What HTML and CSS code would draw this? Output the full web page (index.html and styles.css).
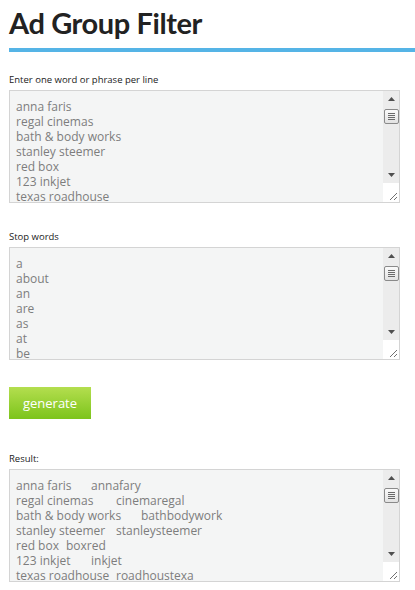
FILE: index.html
```html
<!DOCTYPE html>
<html>
<head>
<meta charset="utf-8">
<link rel="stylesheet" href="styles.css">
</head>
<body>
<div class="page">
  <h1 class="title">Ad Group Filter</h1>
  <div class="rule"></div>

  <div class="group first">
    <label class="lbl">Enter one word or phrase per line</label>
    <div class="field">
      <textarea class="ta" spellcheck="false">anna faris
regal cinemas
bath &amp; body works
stanley steemer
red box
123 inkjet
texas roadhouse</textarea>
      <div class="sb">
        <div class="sb-btn"><svg width="7" height="4" viewBox="0 0 7 4"><path d="M0 4 L3.5 0 L7 4 Z" fill="#505050"/></svg></div>
        <div class="sb-track"><div class="sb-thumb"><i></i><i></i><i></i><i></i></div></div>
        <div class="sb-btn"><svg width="7" height="4" viewBox="0 0 7 4"><path d="M0 0 L7 0 L3.5 4 Z" fill="#505050"/></svg></div>
        <div class="sb-corner"><svg width="8" height="8" viewBox="0 0 8 8"><path d="M1 8 L8 1 M5 8 L8 5" stroke="#707070" stroke-width="1"/></svg></div>
      </div>
    </div>
  </div>

  <div class="group">
    <label class="lbl">Stop words</label>
    <div class="field">
      <textarea class="ta" spellcheck="false">a
about
an
are
as
at
be
by
com
for
from
how
in
is
it
of
on
or
that
the
this
to
was
what
when
where
who
will
with
www</textarea>
      <div class="sb">
        <div class="sb-btn"><svg width="7" height="4" viewBox="0 0 7 4"><path d="M0 4 L3.5 0 L7 4 Z" fill="#505050"/></svg></div>
        <div class="sb-track"><div class="sb-thumb"><i></i><i></i><i></i><i></i></div></div>
        <div class="sb-btn"><svg width="7" height="4" viewBox="0 0 7 4"><path d="M0 0 L7 0 L3.5 4 Z" fill="#505050"/></svg></div>
        <div class="sb-corner"><svg width="8" height="8" viewBox="0 0 8 8"><path d="M1 8 L8 1 M5 8 L8 5" stroke="#707070" stroke-width="1"/></svg></div>
      </div>
    </div>
  </div>

  <button class="btn" type="button">generate</button>

  <div class="group result">
    <label class="lbl">Result:</label>
    <div class="field">
      <textarea class="ta" spellcheck="false">anna faris	annafary
regal cinemas	cinemaregal
bath &amp; body works	bathbodywork
stanley steemer	stanleysteemer
red box	boxred
123 inkjet	inkjet
texas roadhouse	roadhoustexa</textarea>
      <div class="sb">
        <div class="sb-btn"><svg width="7" height="4" viewBox="0 0 7 4"><path d="M0 4 L3.5 0 L7 4 Z" fill="#505050"/></svg></div>
        <div class="sb-track"><div class="sb-thumb"><i></i><i></i><i></i><i></i></div></div>
        <div class="sb-btn"><svg width="7" height="4" viewBox="0 0 7 4"><path d="M0 0 L7 0 L3.5 4 Z" fill="#505050"/></svg></div>
        <div class="sb-corner"><svg width="8" height="8" viewBox="0 0 8 8"><path d="M1 8 L8 1 M5 8 L8 5" stroke="#707070" stroke-width="1"/></svg></div>
      </div>
    </div>
  </div>
</div>
</body>
</html>
```
FILE: styles.css
```css
html, body {
  margin: 0;
  padding: 0;
  background: #ffffff;
}
body {
  font-family: "Open Sans", "Noto Sans", sans-serif;
  color: #333;
}
.page {
  padding-left: 9px;
}
.title {
  margin: 0;
  padding-top: 5px;
  font-family: Lato, "Open Sans", sans-serif;
  font-size: 29px;
  line-height: 36px;
  font-weight: 700;
  letter-spacing: -0.4px;
  color: #222222;
}
.rule {
  margin-top: 7px;
  height: 4px;
  background: #55b4e6;
}
.group {
  width: 391px;
  margin-top: 27px;
}
.group.first {
  margin-top: 21px;
}
.group.result {
  margin-top: 33px;
}
.lbl {
  display: block;
  font-size: 9.5px;
  line-height: 14px;
  color: #222;
  margin-bottom: 3px;
}
.field {
  display: flex;
  height: 113px;
  box-sizing: border-box;
  border: 1px solid #d4d4d4;
  background: #f4f5f5;
}
.ta {
  flex: 1;
  min-width: 0;
  margin: 0;
  border: 0;
  outline: none;
  background: transparent;
  resize: none;
  overflow: hidden;
  padding: 8px 6px 0 6px;
  font-family: "Open Sans", "Noto Sans", sans-serif;
  font-size: 12px;
  line-height: 15px;
  color: #7d7d7d;
  tab-size: 25px;
  white-space: pre;
}
.sb {
  width: 16px;
  display: flex;
  flex-direction: column;
  background: #ececec;
}
.sb-btn {
  height: 16px;
  display: flex;
  align-items: center;
  justify-content: center;
}
.sb-btn svg {
  display: block;
}
.sb-track {
  flex: 1;
  padding-top: 2px;
}
.sb-thumb {
  width: 13px;
  height: 13px;
  margin-left: 1px;
  border: 1px solid #8a8a8a;
  border-radius: 2px;
  background: linear-gradient(#fafafa, #e2e2e2);
  display: flex;
  flex-direction: column;
  justify-content: center;
  align-items: center;
  gap: 1px;
}
.sb-thumb i {
  display: block;
  width: 7px;
  height: 1px;
  background: #6a6a6a;
}
.sb-corner {
  height: 19px;
  background: #ffffff;
  display: flex;
  align-items: flex-end;
  justify-content: flex-end;
  padding: 0 2px 2px 0;
  box-sizing: border-box;
}
.sb-corner svg {
  display: block;
}
.btn {
  display: block;
  margin-top: 27px;
  width: 82px;
  height: 32px;
  border: 0;
  padding: 0;
  background: linear-gradient(#b4de4f, #7cc41b);
  color: #ffffff;
  font-family: "Open Sans", "Noto Sans", sans-serif;
  font-size: 13px;
  cursor: pointer;
}
```
